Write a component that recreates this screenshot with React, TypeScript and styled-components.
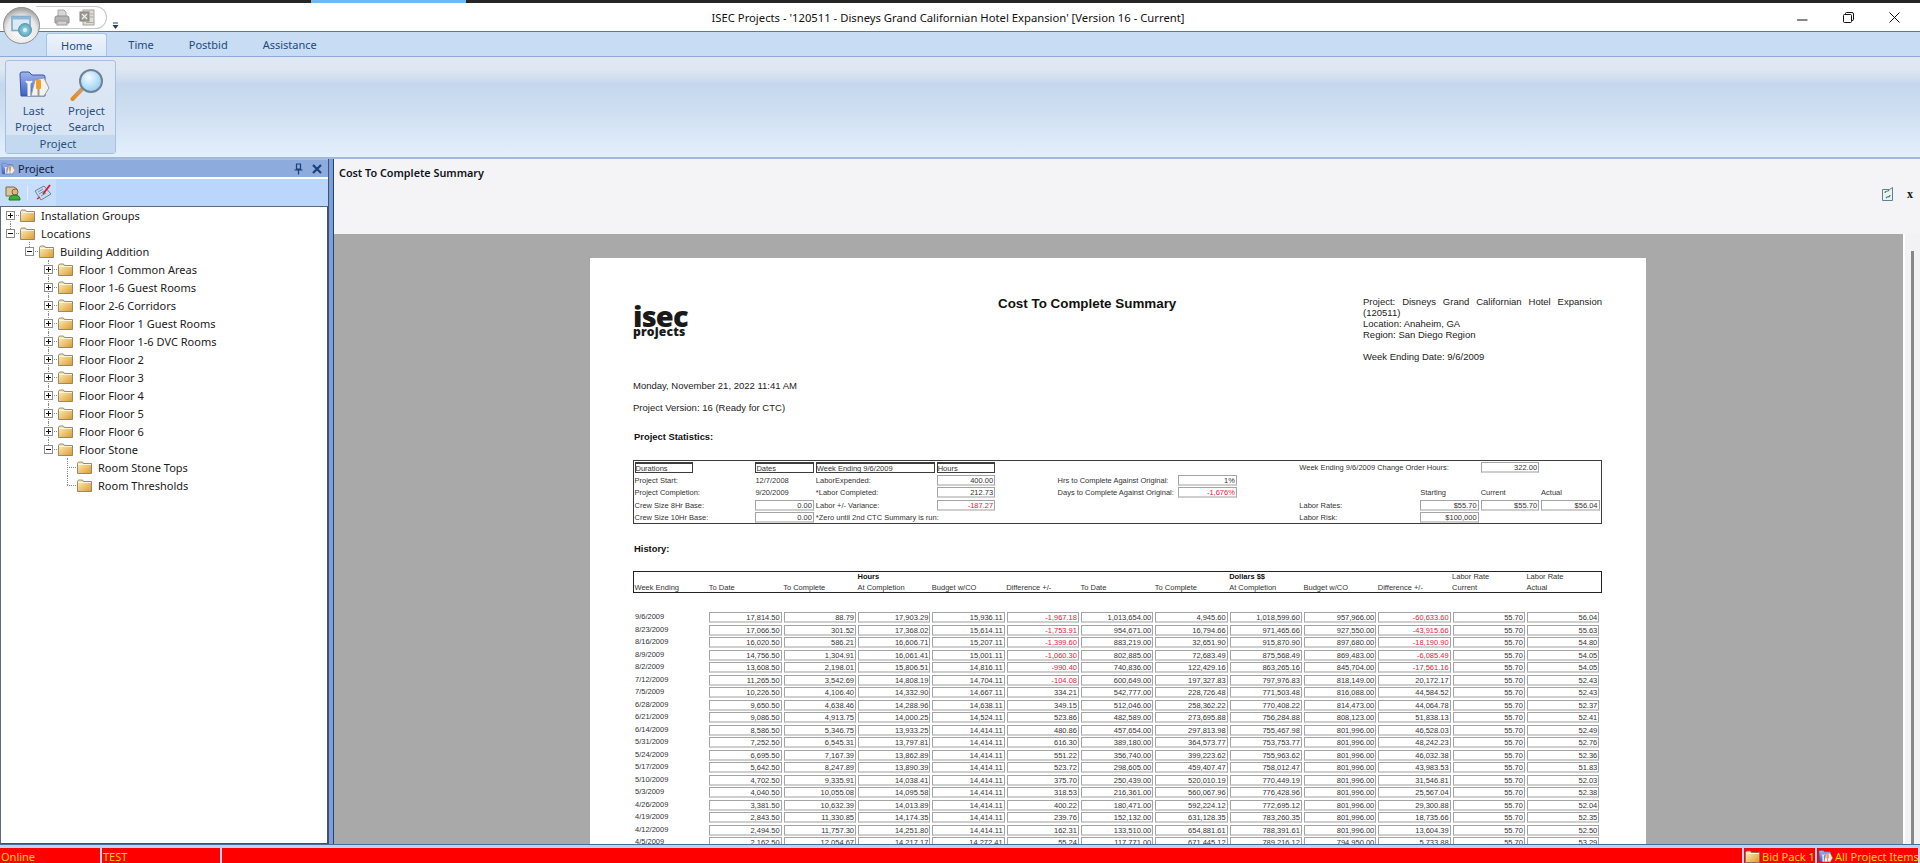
import React from 'react';
import styled, { createGlobalStyle } from 'styled-components';

const uiFont = `"Noto Sans", "Open Sans", sans-serif`;
const reportFont = `"Liberation Sans", Arial, sans-serif`;

const GlobalStyle = createGlobalStyle`
  html, body, #root {
    margin: 0;
    height: 100%;
    overflow: hidden;
  }
  body {
    font-family: ${uiFont};
    background: #fff;
  }
`;

const Shell = styled.div`
  position: relative;
  display: flex;
  flex-direction: column;
  width: 1920px;
  height: 863px;
  overflow: hidden;
`;

const TaskStrip = styled.div`
  height: 3px;
  flex: none;
  background: #262626;
  padding-left: 311px;
`;

const TaskStripActive = styled.div`
  width: 155px;
  height: 3px;
  background: #6fb8f1;
`;

const TitleBar = styled.div`
  position: relative;
  height: 29px;
  flex: none;
  box-sizing: border-box;
  display: flex;
  align-items: center;
  justify-content: center;
  padding-right: 24px;
  background: #fff;
  border-bottom: 1px solid #66798a;
  font-size: 11.27px;
  color: #111;
`;

const WindowButtons = styled.div`
  position: absolute;
  right: 20px;
  top: 9px;
  display: flex;
  gap: 35px;
`;

const Orb = styled.div`
  position: absolute;
  left: 3px;
  top: 7px;
  width: 37px;
  height: 37px;
  z-index: 3;
`;

const QuickAccess = styled.div`
  position: absolute;
  left: 36px;
  top: 6px;
  width: 71px;
  height: 23px;
  box-sizing: border-box;
  border: 1px solid #c4c8cc;
  border-left: none;
  border-radius: 0 12px 12px 0;
  display: flex;
  align-items: center;
  gap: 9px;
  padding-left: 18px;
  z-index: 2;
`;

const QuickMenu = styled.div`
  position: absolute;
  left: 112px;
  top: 13px;
  z-index: 2;
`;

const TabStrip = styled.div`
  height: 24px;
  flex: none;
  display: flex;
  align-items: flex-end;
  padding-left: 46px;
  background: #c8dcf4;
`;

const Tab = styled.div<{ $active?: boolean }>`
  height: ${(p) => (p.$active ? '23px' : '24px')};
  box-sizing: border-box;
  display: flex;
  align-items: center;
  padding: 0 ${(p) => (p.$active ? '14px' : '17.5px')};
  margin-right: ${(p) => (p.$active ? '3.5px' : '0')};
  font-size: 11px;
  color: #1d4a80;
  border-radius: 3px 3px 0 0;
  ${(p) =>
    p.$active
      ? `background: linear-gradient(#edf4fc, #dce8f6);
         border: 1px solid #a9c4e6;
         border-bottom: none;`
      : ''}
`;

const Ribbon = styled.div`
  height: 103px;
  flex: none;
  box-sizing: border-box;
  padding: 3px 2px 3px 5px;
  background: linear-gradient(
    #dfe7f3 0,
    #dfe7f3 12px,
    #c5d7ec 28px,
    #cfdff2 55px,
    #e3effc 100%
  );
  border-top: 1px solid #8eaad8;
  border-bottom: 2px solid #a3b8d8;
`;

const RibbonGroup = styled.div`
  width: 111px;
  height: 100%;
  box-sizing: border-box;
  display: flex;
  flex-direction: column;
  background: linear-gradient(#dfe8f5, #d6e4f4);
  border: 1px solid #a8c0de;
  border-radius: 3px;
`;

const RibbonButtons = styled.div`
  flex: 1;
  display: flex;
  padding: 5px 0 0 9px;
  gap: 16px;
`;

const RibbonButton = styled.div`
  width: 37px;
  display: flex;
  flex-direction: column;
  align-items: center;
  font-size: 11.3px;
  line-height: 16px;
  color: #2a5081;
  text-align: center;
  white-space: nowrap;
`;

const RibbonIcon = styled.div`
  height: 37px;
  display: flex;
  align-items: center;
`;

const RibbonGroupLabel = styled.div`
  height: 20px;
  background: #c3d9f0;
  font-size: 11.3px;
  line-height: 18px;
  color: #2a5081;
  text-align: center;
  padding-right: 5px;
`;

const Main = styled.div`
  flex: 1;
  min-height: 0;
  display: flex;
`;

const SidePanel = styled.div`
  width: 328px;
  flex: none;
  display: flex;
  flex-direction: column;
`;

const PanelHeader = styled.div`
  height: 18px;
  flex: none;
  display: flex;
  align-items: center;
  gap: 3px;
  padding: 0 6px 0 1px;
  background: #8dabdc;
  font-size: 11px;
  color: #10203a;
  border-top: 1px solid #a9c0e4;
  box-sizing: border-box;
`;

const PanelTitle = styled.span`
  flex: 1;
`;

const PanelHeaderIcons = styled.div`
  display: flex;
  align-items: center;
  gap: 9px;
`;

const PanelToolbar = styled.div`
  height: 27px;
  flex: none;
  margin-top: 2px;
  background: #bad6fa;
  display: flex;
`;

const ToolbarGroup = styled.div`
  display: flex;
  align-items: center;
  gap: 6px;
  padding: 0 4px 0 5px;
  background: #c6ddfb;
`;

const ToolbarSep = styled.div`
  width: 1px;
  height: 14px;
  background: #e6f0fc;
`;

const TreeBox = styled.div`
  flex: 1;
  min-height: 0;
  background: #fff;
  border: 1px solid #5e6a78;
  border-right-color: #3b5277;
  border-bottom-color: #3b5277;
  overflow: hidden;
`;

const TreeRows = styled.div`
  margin-top: -1px;
`;

const TreeRow = styled.div<{ $level: number }>`
  position: relative;
  height: 18px;
  display: flex;
  align-items: center;
  padding-left: ${(p) => 5 + 19 * p.$level}px;
  font-size: 11px;
  color: #1a1a1a;
  white-space: nowrap;
`;

const Guide = styled.span<{ $level: number; $kind: string }>`
  position: absolute;
  left: ${(p) => 9 + 19 * p.$level}px;
  top: ${(p) => (p.$kind === 'lower' ? '9px' : '0')};
  height: ${(p) => (p.$kind === 'full' ? '18px' : '9px')};
  border-left: 1px dotted #8a8a8a;
`;

const Tick = styled.span<{ $level: number }>`
  position: absolute;
  left: ${(p) => 9 + 19 * p.$level}px;
  top: 9px;
  width: 9px;
  border-top: 1px dotted #8a8a8a;
`;

const Expander = styled.span<{ $hidden?: boolean }>`
  position: relative;
  width: 9px;
  height: 9px;
  flex: none;
  margin-right: 5px;
  box-sizing: border-box;
  border: 1px solid ${(p) => (p.$hidden ? 'transparent' : '#8c8c8c')};
  background: ${(p) => (p.$hidden ? 'transparent' : '#fff')};
  z-index: 1;
`;

const ExpanderBar = styled.span<{ $vertical?: boolean }>`
  position: absolute;
  background: #111;
  ${(p) =>
    p.$vertical
      ? 'left: 3px; top: 1px; width: 1px; height: 5px;'
      : 'left: 1px; top: 3px; width: 5px; height: 1px;'}
`;

const TreeLabel = styled.span`
  margin-left: 6px;
`;

const Splitter = styled.div`
  width: 6px;
  flex: none;
  box-sizing: border-box;
  background: #7d9ed6;
  border-right: 1px solid #24426f;
  border-left: 1px solid #3b5277;
`;

const ContentPane = styled.div`
  flex: 1;
  min-width: 0;
  display: flex;
  flex-direction: column;
`;

const ContentHeader = styled.div`
  height: 75px;
  flex: none;
  box-sizing: border-box;
  background: #f4f3f6;
  padding: 5px 7px 0 5px;
`;

const ContentTitle = styled.div`
  font-size: 10.8px;
  line-height: 18px;
  font-weight: 600;
  color: #10141c;
`;

const ContentActions = styled.div`
  display: flex;
  justify-content: flex-end;
  align-items: center;
  gap: 14px;
  margin-top: 5px;
`;

const CloseMark = styled.span`
  font-family: "Liberation Serif", serif;
  font-size: 12px;
  font-weight: 700;
  line-height: 12px;
  color: #111;
`;

const ViewerRow = styled.div`
  flex: 1;
  min-height: 0;
  display: flex;
`;

const Viewer = styled.div`
  flex: 1;
  min-width: 0;
  overflow: hidden;
  background: #a9a9a9;
  padding: 24px 257px 0 256px;
`;

const ScrollTrack = styled.div`
  width: 17px;
  flex: none;
  box-sizing: border-box;
  background: #f2f1f4;
  border-left: 2px solid #fff;
  padding: 17px 0 0 6px;
`;

const ScrollThumb = styled.div`
  width: 3px;
  height: 100%;
  background: #888;
`;

const Page = styled.div`
  width: 1056px;
  box-sizing: border-box;
  background: #fff;
  padding: 37px 44px 40px 43px;
  font-family: ${reportFont};
  color: #222;
`;

const ReportHead = styled.div`
  display: flex;
  height: 76px;
`;

const LogoBox = styled.div`
  width: 160px;
  padding-top: 11px;
  font-family: "Open Sans", sans-serif;
  font-weight: 800;
  color: #1a1a1a;
`;

const LogoMain = styled.div`
  font-size: 29px;
  line-height: 20px;
  letter-spacing: -0.8px;
  height: 19px;
`;

const LogoSub = styled.div`
  font-size: 12.2px;
  line-height: 13px;
  letter-spacing: 0.15px;
`;

const ReportTitle = styled.div`
  width: 570px;
  padding: 0 0 0 205px;
  box-sizing: border-box;
  font-size: 13.4px;
  font-weight: 700;
  color: #111;
  line-height: 18px;
  white-space: nowrap;
`;

const ProjectInfo = styled.div`
  width: 239px;
  font-size: 9.5px;
  line-height: 10.9px;
  color: #222;
  padding-top: 2px;
`;

const InfoJustified = styled.div`
  text-align: justify;
`;

const InfoGap = styled.div`
  height: 11px;
`;

const ReportLine = styled.div<{ $top: number }>`
  margin-top: ${(p) => p.$top}px;
  font-size: 9.5px;
  line-height: 11px;
`;

const SectionHeading = styled.div<{ $top: number }>`
  margin-top: ${(p) => p.$top}px;
  margin-left: 1px;
  font-size: 9.4px;
  line-height: 11px;
  font-weight: 700;
  color: #111;
`;

const StatsBox = styled.div`
  margin-top: 18px;
  height: 64px;
  box-sizing: border-box;
  border: 1.5px solid #3c3c3c;
  padding: 1px 0 0 0.5px;
`;

const StatRow = styled.div`
  display: grid;
  grid-template-columns: repeat(16, 60.44px);
  grid-template-rows: 12.5px;
  height: 12.5px;
  font-size: 7.5px;
  line-height: 11px;
  color: #333;
`;

const StatText = styled.div<{ $col: number }>`
  grid-column: ${(p) => p.$col};
  grid-row: 1;
  white-space: nowrap;
`;

const StatHead = styled.div<{ $col: number; $span?: number }>`
  grid-column: ${(p) => p.$col} / span ${(p) => p.$span ?? 1};
  grid-row: 1;
  box-sizing: border-box;
  height: 11px;
  margin-right: 2px;
  border: 1px solid #3c3c3c;
  border-top-width: 2px;
  line-height: 9px;
  white-space: nowrap;
`;

const ValueBox = styled.div<{ $col?: number; $red?: boolean }>`
  ${(p) => (p.$col ? `grid-column: ${p.$col}; grid-row: 1;` : '')}
  box-sizing: border-box;
  height: 11px;
  margin-right: 2px;
  padding-right: 1px;
  border: 1px solid #a4a4a4;
  border-bottom: 2px solid #cfcfcf;
  text-align: right;
  font-size: 7.5px;
  line-height: 9px;
  color: ${(p) => (p.$red ? '#e8203a' : '#333')};
  white-space: nowrap;
  overflow: hidden;
`;

const HistoryHeader = styled.div`
  margin-top: 17px;
  height: 22px;
  box-sizing: border-box;
  border: 1.5px solid #222;
  padding: 0 0 0 0.5px;
`;

const HistoryGrid = styled.div`
  display: grid;
  grid-template-columns: repeat(13, 74.33px);
  font-size: 7.5px;
  line-height: 10.5px;
  color: #333;
`;

const HistoryCaption = styled.div<{ $bold?: boolean }>`
  font-weight: ${(p) => (p.$bold ? 700 : 400)};
  color: ${(p) => (p.$bold ? '#111' : '#333')};
  white-space: nowrap;
`;

const HistoryRows = styled.div`
  margin-top: 19px;
  margin-left: 2px;
  display: grid;
  grid-template-columns: repeat(13, 74.33px);
  grid-auto-rows: 12.53px;
  font-size: 7.5px;
  color: #333;
`;

const WeekCell = styled.div`
  line-height: 10px;
`;

const StatusBar = styled.div`
  height: 19px;
  flex: none;
  box-sizing: border-box;
  border-top: 1px solid #4c6d99;
  background: #bcd4f4;
  padding-top: 3px;
  display: flex;
  gap: 2px;
  padding-right: 2px;
`;

const StatusCell = styled.div<{ $width?: number }>`
  ${(p) => (p.$width ? `width: ${p.$width}px; flex: none;` : 'flex: 1;')}
  height: 15px;
  display: flex;
  align-items: center;
  gap: 2px;
  padding: 2px 0 0 1px;
  box-sizing: border-box;
  background: #ff0000;
  color: #ffd800;
  font-size: 11px;
  line-height: 13px;
  overflow: hidden;
  white-space: nowrap;

  svg {
    flex: none;
  }
`;

/* icons */

const FolderIcon = () => (
  <svg width="15" height="13" viewBox="0 0 15 13">
    <defs>
      <linearGradient id="folderFill" x1="0" y1="0" x2="1" y2="1">
        <stop offset="0" stopColor="#fff3c2" />
        <stop offset="1" stopColor="#dc9a2c" />
      </linearGradient>
    </defs>
    <path d="M0.5 2.5 L1.5 1 H5.5 L6.5 2.5 H14.5 V12.5 H0.5 Z" fill="url(#folderFill)" stroke="#7b7360" strokeWidth="0.8" />
    <path d="M1 3.5 H14" stroke="#fff8dc" strokeWidth="1" />
  </svg>
);

const Minimize = () => (
  <svg width="11" height="11" viewBox="0 0 11 11">
    <path d="M0 8 H10.5" stroke="#111" strokeWidth="1" />
  </svg>
);

const Restore = () => (
  <svg width="11" height="11" viewBox="0 0 11 11">
    <rect x="0.5" y="2.5" width="8" height="8" rx="1" fill="none" stroke="#111" />
    <path d="M2.5 2.5 V1.5 Q2.5 0.5 3.5 0.5 H9 Q10.5 0.5 10.5 2 V7.5 Q10.5 8.5 9 8.5" fill="none" stroke="#111" />
  </svg>
);

const CloseWin = () => (
  <svg width="11" height="11" viewBox="0 0 11 11">
    <path d="M0.5 0.5 L10.5 10.5 M10.5 0.5 L0.5 10.5" stroke="#111" strokeWidth="1" />
  </svg>
);

const OrbIcon = () => (
  <svg width="37" height="37" viewBox="0 0 37 37">
    <defs>
      <radialGradient id="orbFill" cx="0.5" cy="0.65" r="0.6">
        <stop offset="0" stopColor="#ffffff" />
        <stop offset="0.7" stopColor="#e8e8e8" />
        <stop offset="1" stopColor="#a8a8a8" />
      </radialGradient>
      <radialGradient id="discFill" cx="0.5" cy="0.5" r="0.5">
        <stop offset="0" stopColor="#a9dde6" />
        <stop offset="1" stopColor="#5aa5bb" />
      </radialGradient>
    </defs>
    <circle cx="18.5" cy="18.5" r="18" fill="url(#orbFill)" stroke="#8d8d8d" />
    <rect x="9" y="9.5" width="18" height="14" fill="#dceaf2" stroke="#7fa9c9" strokeWidth="1.6" />
    <rect x="9" y="9.5" width="18" height="3" fill="#8fb8d6" />
    <circle cx="22" cy="23" r="6.5" fill="url(#discFill)" stroke="#5d9ab0" />
    <circle cx="22" cy="23" r="2" fill="#d9f1f6" />
  </svg>
);

const PrinterIcon = () => (
  <svg width="16" height="17" viewBox="0 0 16 17">
    <path d="M4 1 H10 L12 3 V8 H4 Z" fill="#d7d7d7" stroke="#a6a6a6" />
    <path d="M1 9 Q1 7 3 7 H13 Q15 7 15 9 V14 H1 Z" fill="#b5b5b5" stroke="#8e8e8e" />
    <rect x="3" y="12" width="10" height="4" fill="#cfcfcf" stroke="#9b9b9b" />
  </svg>
);

const ExportIcon = () => (
  <svg width="16" height="17" viewBox="0 0 16 17">
    <rect x="4" y="1" width="11" height="15" fill="#dcdcd4" stroke="#a3a39b" />
    <rect x="1" y="3" width="9" height="9" fill="#9c9c94" stroke="#85857e" />
    <path d="M3 5 L8 10 M8 5 L3 10" stroke="#f0f0f0" strokeWidth="1.2" />
    <path d="M11 5 H14 M11 8 H14 M7 13.5 H14" stroke="#a9a9a1" />
  </svg>
);

const QuickArrow = () => (
  <svg width="7" height="8" viewBox="0 0 7 8">
    <path d="M1 1 H6" stroke="#1d3f72" />
    <path d="M0.5 3 H6.5 L3.5 7 Z" fill="#1d3f72" />
  </svg>
);

const ToolsFolderIcon = ({ size = 32 }: { size?: number }) => (
  <svg width={size} height={size} viewBox="0 0 32 32">
    <defs>
      <linearGradient id="toolsFolder" x1="0" y1="0" x2="0" y2="1">
        <stop offset="0" stopColor="#9fb7ec" />
        <stop offset="1" stopColor="#3d5fc0" />
      </linearGradient>
    </defs>
    <path d="M2 5 Q2 3 4 3 H11 L14 6 H25 Q27 6 27 8 V27 H3 Z" fill="url(#toolsFolder)" stroke="#3552a8" />
    <path d="M17 11 L26 9 L31 19 L26 27 H13 Z" fill="#f2f2ee" stroke="#9a9a96" />
    <path d="M11 12 V27" stroke="#f4f4f4" strokeWidth="3" />
    <path d="M8 12 Q11 16 14 12" stroke="#f4f4f4" strokeWidth="2" fill="none" />
    <rect x="18" y="11" width="5" height="9" rx="1" fill="#f59a2c" />
    <path d="M20.5 20 V27" stroke="#9c9c9c" strokeWidth="2" />
  </svg>
);

const SearchIcon = () => (
  <svg width="34" height="34" viewBox="0 0 34 34">
    <defs>
      <radialGradient id="lensFill" cx="0.4" cy="0.35" r="0.7">
        <stop offset="0" stopColor="#f2fbff" />
        <stop offset="1" stopColor="#8fcdf2" />
      </radialGradient>
      <linearGradient id="handleFill" x1="0" y1="1" x2="1" y2="0">
        <stop offset="0" stopColor="#e88a1c" />
        <stop offset="1" stopColor="#c9a06a" />
      </linearGradient>
    </defs>
    <path d="M2.5 31 L13 20" stroke="url(#handleFill)" strokeWidth="4" strokeLinecap="round" />
    <circle cx="21" cy="13" r="11" fill="url(#lensFill)" stroke="#6f8296" strokeWidth="2" />
  </svg>
);

const PeopleIcon = () => (
  <svg width="16" height="17" viewBox="0 0 16 17">
    <path d="M1 3 H9 L12 5 V12 H1 Z" fill="#d8c79a" stroke="#7e6a44" />
    <circle cx="10" cy="8" r="3" fill="#e9b17f" stroke="#8d6237" />
    <path d="M4 16 Q4 11 10 11 Q15 11 15 16 Z" fill="#3fae3a" stroke="#23761f" />
  </svg>
);

const ChecklistIcon = () => (
  <svg width="18" height="18" viewBox="0 0 18 18">
    <path d="M1 7 L10 2 L17 10 L7 16 Z" fill="#c7ddf3" stroke="#6482a6" />
    <path d="M4 8 L9 5 M5 10 L10 7 M7 12 L12 9" stroke="#6f92bd" />
    <path d="M9 10 L16 1" stroke="#d8232a" strokeWidth="2" />
    <path d="M3 15 L6 13" stroke="#d8232a" strokeWidth="1.5" />
  </svg>
);

const PinIcon = () => (
  <svg width="9" height="12" viewBox="0 0 9 12">
    <path d="M2 1 H7 M2.5 1 V6 H6.5 V1 M0.5 7 H8.5 M4.5 7 V11.5" stroke="#1b3f77" strokeWidth="1.2" fill="none" />
  </svg>
);

const PanelClose = () => (
  <svg width="10" height="10" viewBox="0 0 10 10">
    <path d="M1 1 L9 9 M9 1 L1 9" stroke="#1b3f77" strokeWidth="2.2" />
  </svg>
);

const RefreshDocIcon = () => (
  <svg width="11" height="14" viewBox="0 0 11 14">
    <path d="M0.5 2.5 H7.5 L10.5 0.5 V13.5 H0.5 Z" fill="#eaf1f8" stroke="#5f7f9f" />
    <path d="M3 6 Q3 4 6 4 L7 3 M8 8 Q8 10 5 10 L4 11" stroke="#4f8f2a" strokeWidth="1.2" fill="none" />
  </svg>
);

type TreeItem = {
  label: string;
  level: number;
  exp?: '+' | '-';
  guide: 'full' | 'upper' | 'lower';
};

const treeItems: TreeItem[] = [
  { label: 'Installation Groups', level: 0, exp: '+', guide: 'lower' },
  { label: 'Locations', level: 0, exp: '-', guide: 'upper' },
  { label: 'Building Addition', level: 1, exp: '-', guide: 'upper' },
  { label: 'Floor 1 Common Areas', level: 2, exp: '+', guide: 'full' },
  { label: 'Floor 1-6 Guest Rooms', level: 2, exp: '+', guide: 'full' },
  { label: 'Floor 2-6 Corridors', level: 2, exp: '+', guide: 'full' },
  { label: 'Floor Floor 1 Guest Rooms', level: 2, exp: '+', guide: 'full' },
  { label: 'Floor Floor 1-6 DVC Rooms', level: 2, exp: '+', guide: 'full' },
  { label: 'Floor Floor 2', level: 2, exp: '+', guide: 'full' },
  { label: 'Floor Floor 3', level: 2, exp: '+', guide: 'full' },
  { label: 'Floor Floor 4', level: 2, exp: '+', guide: 'full' },
  { label: 'Floor Floor 5', level: 2, exp: '+', guide: 'full' },
  { label: 'Floor Floor 6', level: 2, exp: '+', guide: 'full' },
  { label: 'Floor Stone', level: 2, exp: '-', guide: 'upper' },
  { label: 'Room Stone Tops', level: 3, guide: 'full' },
  { label: 'Room Thresholds', level: 3, guide: 'upper' },
];

const historyRows = [
  '9/6/2009|17,814.50|88.79|17,903.29|15,936.11|-1,967.18|1,013,654.00|4,945.60|1,018,599.60|957,966.00|-60,633.60|55.70|56.04',
  '8/23/2009|17,066.50|301.52|17,368.02|15,614.11|-1,753.91|954,671.00|16,794.66|971,465.66|927,550.00|-43,915.66|55.70|55.63',
  '8/16/2009|16,020.50|586.21|16,606.71|15,207.11|-1,399.60|883,219.00|32,651.90|915,870.90|897,680.00|-18,190.90|55.70|54.80',
  '8/9/2009|14,756.50|1,304.91|16,061.41|15,001.11|-1,060.30|802,885.00|72,683.49|875,568.49|869,483.00|-6,085.49|55.70|54.05',
  '8/2/2009|13,608.50|2,198.01|15,806.51|14,816.11|-990.40|740,836.00|122,429.16|863,265.16|845,704.00|-17,561.16|55.70|54.05',
  '7/12/2009|11,265.50|3,542.69|14,808.19|14,704.11|-104.08|600,649.00|197,327.83|797,976.83|818,149.00|20,172.17|55.70|52.43',
  '7/5/2009|10,226.50|4,106.40|14,332.90|14,667.11|334.21|542,777.00|228,726.48|771,503.48|816,088.00|44,584.52|55.70|52.43',
  '6/28/2009|9,650.50|4,638.46|14,288.96|14,638.11|349.15|512,046.00|258,362.22|770,408.22|814,473.00|44,064.78|55.70|52.37',
  '6/21/2009|9,086.50|4,913.75|14,000.25|14,524.11|523.86|482,589.00|273,695.88|756,284.88|808,123.00|51,838.13|55.70|52.41',
  '6/14/2009|8,586.50|5,346.75|13,933.25|14,414.11|480.86|457,654.00|297,813.98|755,467.98|801,996.00|46,528.03|55.70|52.49',
  '5/31/2009|7,252.50|6,545.31|13,797.81|14,414.11|616.30|389,180.00|364,573.77|753,753.77|801,996.00|48,242.23|55.70|52.76',
  '5/24/2009|6,695.50|7,167.39|13,862.89|14,414.11|551.22|356,740.00|399,223.62|755,963.62|801,996.00|46,032.38|55.70|52.36',
  '5/17/2009|5,642.50|8,247.89|13,890.39|14,414.11|523.72|298,605.00|459,407.47|758,012.47|801,996.00|43,983.53|55.70|51.83',
  '5/10/2009|4,702.50|9,335.91|14,038.41|14,414.11|375.70|250,439.00|520,010.19|770,449.19|801,996.00|31,546.81|55.70|52.03',
  '5/3/2009|4,040.50|10,055.08|14,095.58|14,414.11|318.53|216,361.00|560,067.96|776,428.96|801,996.00|25,567.04|55.70|52.38',
  '4/26/2009|3,381.50|10,632.39|14,013.89|14,414.11|400.22|180,471.00|592,224.12|772,695.12|801,996.00|29,300.88|55.70|52.04',
  '4/19/2009|2,843.50|11,330.85|14,174.35|14,414.11|239.76|152,132.00|631,128.35|783,260.35|801,996.00|18,735.66|55.70|52.35',
  '4/12/2009|2,494.50|11,757.30|14,251.80|14,414.11|162.31|133,510.00|654,881.61|788,391.61|801,996.00|13,604.39|55.70|52.50',
  '4/5/2009|2,162.50|12,054.67|14,217.17|14,272.41|55.24|117,771.00|671,445.12|789,216.12|794,950.00|5,733.88|55.70|53.29',
].map((r) => r.split('|'));

const captionTop = ['', '', '', 'Hours', '', '', '', '', 'Dollars $$', '', '', 'Labor Rate', 'Labor Rate'];
const captionBottom = [
  'Week Ending',
  'To Date',
  'To Complete',
  'At Completion',
  'Budget w/CO',
  'Difference +/-',
  'To Date',
  'To Complete',
  'At Completion',
  'Budget w/CO',
  'Difference +/-',
  'Current',
  'Actual',
];

const Tree = () => (
  <TreeBox>
    <TreeRows>
      {treeItems.map((item) => (
        <TreeRow key={item.label} $level={item.level}>
          <Guide $level={item.level} $kind={item.guide} />
          <Tick $level={item.level} />
          <Expander $hidden={!item.exp}>
            {item.exp && <ExpanderBar />}
            {item.exp === '+' && <ExpanderBar $vertical />}
          </Expander>
          <FolderIcon />
          <TreeLabel>{item.label}</TreeLabel>
        </TreeRow>
      ))}
    </TreeRows>
  </TreeBox>
);

const StatsTable = () => (
  <StatsBox>
    <StatRow>
      <StatHead $col={1}>Durations</StatHead>
      <StatHead $col={3}>Dates</StatHead>
      <StatHead $col={4} $span={2}>Week Ending 9/6/2009</StatHead>
      <StatHead $col={6}>Hours</StatHead>
      <StatText $col={12}>Week Ending 9/6/2009 Change Order Hours:</StatText>
      <ValueBox $col={15}>322.00</ValueBox>
    </StatRow>
    <StatRow>
      <StatText $col={1}>Project Start:</StatText>
      <StatText $col={3}>12/7/2008</StatText>
      <StatText $col={4}>LaborExpended:</StatText>
      <ValueBox $col={6}>400.00</ValueBox>
      <StatText $col={8}>Hrs to Complete Against Original:</StatText>
      <ValueBox $col={10}>1%</ValueBox>
    </StatRow>
    <StatRow>
      <StatText $col={1}>Project Completion:</StatText>
      <StatText $col={3}>9/20/2009</StatText>
      <StatText $col={4}>*Labor Completed:</StatText>
      <ValueBox $col={6}>212.73</ValueBox>
      <StatText $col={8}>Days to Complete Against Original:</StatText>
      <ValueBox $col={10} $red>-1,676%</ValueBox>
      <StatText $col={14}>Starting</StatText>
      <StatText $col={15}>Current</StatText>
      <StatText $col={16}>Actual</StatText>
    </StatRow>
    <StatRow>
      <StatText $col={1}>Crew Size 8Hr Base:</StatText>
      <ValueBox $col={3}>0.00</ValueBox>
      <StatText $col={4}>Labor +/- Variance:</StatText>
      <ValueBox $col={6} $red>-187.27</ValueBox>
      <StatText $col={12}>Labor Rates:</StatText>
      <ValueBox $col={14}>$55.70</ValueBox>
      <ValueBox $col={15}>$55.70</ValueBox>
      <ValueBox $col={16}>$56.04</ValueBox>
    </StatRow>
    <StatRow>
      <StatText $col={1}>Crew Size 10Hr Base:</StatText>
      <ValueBox $col={3}>0.00</ValueBox>
      <StatText $col={4}>*Zero until 2nd CTC Summary is run:</StatText>
      <StatText $col={12}>Labor Risk:</StatText>
      <ValueBox $col={14}>$100,000</ValueBox>
    </StatRow>
  </StatsBox>
);

const HistoryTable = () => (
  <>
    <HistoryHeader>
      <HistoryGrid>
        {captionTop.map((text, i) => (
          <HistoryCaption key={`t${i}`} $bold={i < 11}>
            {text || '\u00a0'}
          </HistoryCaption>
        ))}
        {captionBottom.map((text, i) => (
          <HistoryCaption key={`b${i}`}>{text}</HistoryCaption>
        ))}
      </HistoryGrid>
    </HistoryHeader>
    <HistoryRows>
      {historyRows.map((row) =>
        row.map((value, i) =>
          i === 0 ? (
            <WeekCell key={row[0]}>{value}</WeekCell>
          ) : (
            <ValueBox key={row[0] + i} $red={value.startsWith('-')}>
              {value}
            </ValueBox>
          ),
        ),
      )}
    </HistoryRows>
  </>
);

const Report = () => (
  <Page>
    <ReportHead>
      <LogoBox>
        <LogoMain>isec</LogoMain>
        <LogoSub>projects</LogoSub>
      </LogoBox>
      <ReportTitle>Cost To Complete Summary</ReportTitle>
      <ProjectInfo>
        <InfoJustified>Project: Disneys Grand Californian Hotel Expansion (120511)</InfoJustified>
        <div>Location: Anaheim, GA</div>
        <div>Region: San Diego Region</div>
        <InfoGap />
        <div>Week Ending Date: 9/6/2009</div>
      </ProjectInfo>
    </ReportHead>
    <ReportLine $top={9}>Monday, November 21, 2022 11:41 AM</ReportLine>
    <ReportLine $top={11}>Project Version: 16 (Ready for CTC)</ReportLine>
    <SectionHeading $top={18}>Project Statistics:</SectionHeading>
    <StatsTable />
    <SectionHeading $top={19}>History:</SectionHeading>
    <HistoryTable />
  </Page>
);

export default function App() {
  return (
    <Shell>
      <GlobalStyle />
      <TaskStrip>
        <TaskStripActive />
      </TaskStrip>
      <TitleBar>
        ISEC Projects - '120511 - Disneys Grand Californian Hotel Expansion' [Version 16 - Current]
        <WindowButtons>
          <Minimize />
          <Restore />
          <CloseWin />
        </WindowButtons>
      </TitleBar>
      <Orb>
        <OrbIcon />
      </Orb>
      <QuickAccess>
        <PrinterIcon />
        <ExportIcon />
      </QuickAccess>
      <QuickMenu>
        <QuickArrow />
      </QuickMenu>
      <TabStrip>
        <Tab $active>Home</Tab>
        <Tab>Time</Tab>
        <Tab>Postbid</Tab>
        <Tab>Assistance</Tab>
      </TabStrip>
      <Ribbon>
        <RibbonGroup>
          <RibbonButtons>
            <RibbonButton>
              <RibbonIcon>
                <ToolsFolderIcon />
              </RibbonIcon>
              Last
              <br />
              Project
            </RibbonButton>
            <RibbonButton>
              <RibbonIcon>
                <SearchIcon />
              </RibbonIcon>
              Project
              <br />
              Search
            </RibbonButton>
          </RibbonButtons>
          <RibbonGroupLabel>Project</RibbonGroupLabel>
        </RibbonGroup>
      </Ribbon>
      <Main>
        <SidePanel>
          <PanelHeader>
            <ToolsFolderIcon size={14} />
            <PanelTitle>Project</PanelTitle>
            <PanelHeaderIcons>
              <PinIcon />
              <PanelClose />
            </PanelHeaderIcons>
          </PanelHeader>
          <PanelToolbar>
            <ToolbarGroup>
              <PeopleIcon />
              <ToolbarSep />
              <ChecklistIcon />
            </ToolbarGroup>
          </PanelToolbar>
          <Tree />
        </SidePanel>
        <Splitter />
        <ContentPane>
          <ContentHeader>
            <ContentTitle>Cost To Complete Summary</ContentTitle>
            <ContentActions>
              <RefreshDocIcon />
              <CloseMark>x</CloseMark>
            </ContentActions>
          </ContentHeader>
          <ViewerRow>
            <Viewer>
              <Report />
            </Viewer>
            <ScrollTrack>
              <ScrollThumb />
            </ScrollTrack>
          </ViewerRow>
        </ContentPane>
      </Main>
      <StatusBar>
        <StatusCell $width={100}>Online</StatusCell>
        <StatusCell $width={118}>TEST</StatusCell>
        <StatusCell />
        <StatusCell $width={71}>
          <FolderIcon />
          Bid Pack 1
        </StatusCell>
        <StatusCell $width={101}>
          <ToolsFolderIcon size={15} />
          All Project Items
        </StatusCell>
      </StatusBar>
    </Shell>
  );
}
